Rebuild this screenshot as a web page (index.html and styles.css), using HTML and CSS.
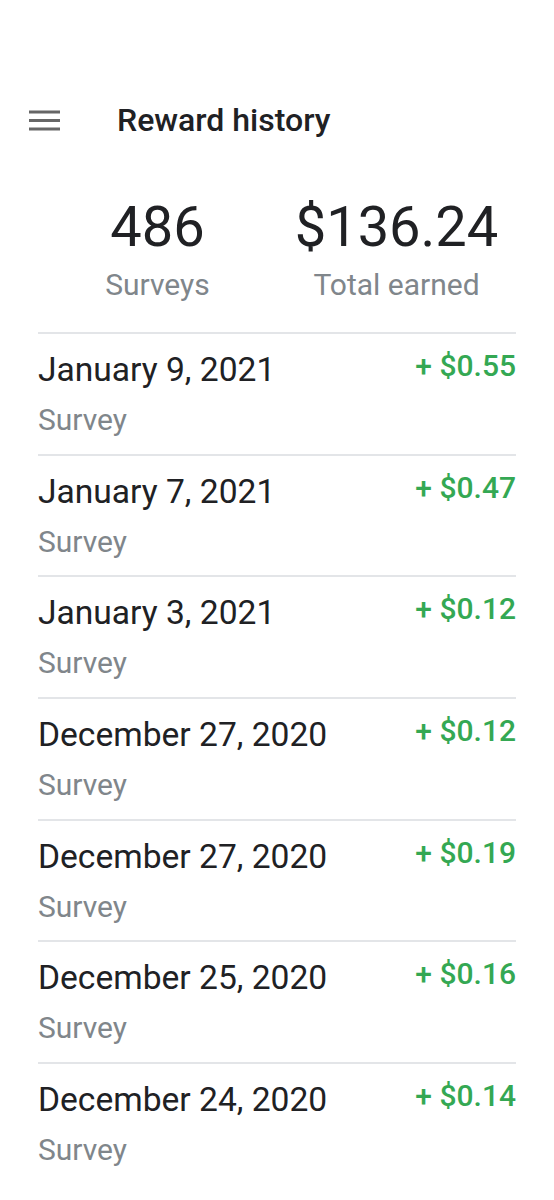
FILE: index.html
```html
<!DOCTYPE html>
<html lang="en">
<head>
    <meta charset="UTF-8">
    <meta name="viewport" content="width=device-width, initial-scale=1.0">
    <title>Reward history</title>
    <link rel="stylesheet" href="styles.css">
</head>
<body>
    <header class="app-bar">
        <button class="menu-button" aria-label="Menu">
            <svg width="31" height="21" viewBox="0 0 31 21">
                <rect x="0" y="0.5" width="31" height="3" fill="#666"/>
                <rect x="0" y="9" width="31" height="3" fill="#666"/>
                <rect x="0" y="17.5" width="31" height="3" fill="#666"/>
            </svg>
        </button>
        <h1 class="title">Reward history</h1>
    </header>

    <section class="summary">
        <div class="stat">
            <div class="stat-value">486</div>
            <div class="stat-label">Surveys</div>
        </div>
        <div class="stat">
            <div class="stat-value">$136.24</div>
            <div class="stat-label">Total earned</div>
        </div>
    </section>

    <ul class="history">
        <li class="entry">
            <div class="entry-info">
                <div class="entry-date">January 9, 2021</div>
                <div class="entry-type">Survey</div>
            </div>
            <div class="entry-amount">+ $0.55</div>
        </li>
        <li class="entry">
            <div class="entry-info">
                <div class="entry-date">January 7, 2021</div>
                <div class="entry-type">Survey</div>
            </div>
            <div class="entry-amount">+ $0.47</div>
        </li>
        <li class="entry">
            <div class="entry-info">
                <div class="entry-date">January 3, 2021</div>
                <div class="entry-type">Survey</div>
            </div>
            <div class="entry-amount">+ $0.12</div>
        </li>
        <li class="entry">
            <div class="entry-info">
                <div class="entry-date">December 27, 2020</div>
                <div class="entry-type">Survey</div>
            </div>
            <div class="entry-amount">+ $0.12</div>
        </li>
        <li class="entry">
            <div class="entry-info">
                <div class="entry-date">December 27, 2020</div>
                <div class="entry-type">Survey</div>
            </div>
            <div class="entry-amount">+ $0.19</div>
        </li>
        <li class="entry">
            <div class="entry-info">
                <div class="entry-date">December 25, 2020</div>
                <div class="entry-type">Survey</div>
            </div>
            <div class="entry-amount">+ $0.16</div>
        </li>
        <li class="entry">
            <div class="entry-info">
                <div class="entry-date">December 24, 2020</div>
                <div class="entry-type">Survey</div>
            </div>
            <div class="entry-amount">+ $0.14</div>
        </li>
    </ul>
</body>
</html>
```

FILE: styles.css
```css
body {
    font-family: Roboto, "Noto Sans", sans-serif;
    margin: 0;
    background-color: #fff;
    color: #202124;
    overflow: hidden;
}
.app-bar {
    display: flex;
    align-items: center;
    height: 62px;
    margin-top: 89px;
    padding-left: 29px;
}
.menu-button {
    background: none;
    border: none;
    padding: 0;
    width: 88px;
    height: 21px;
    text-align: left;
}
.menu-button svg {
    display: block;
}
.title {
    margin: 0;
    font-size: 32px;
    font-weight: 500;
}
.summary {
    display: flex;
    padding: 44px 38px 0;
}
.stat {
    flex: 1;
    text-align: center;
}
.stat-value {
    font-size: 56px;
    line-height: 64px;
}
.stat-label {
    font-size: 30px;
    line-height: 36px;
    margin-top: 8px;
    color: #80868b;
}
.history {
    list-style: none;
    margin: 29px 38px 0;
    padding: 0;
}
.entry {
    display: flex;
    justify-content: space-between;
    height: 119.7px;
    border-top: 2px solid #e3e5e8;
}
.entry-date {
    font-size: 33.6px;
    line-height: 40px;
    margin-top: 16px;
}
.entry-type {
    font-size: 30px;
    line-height: 36px;
    margin-top: 12px;
    color: #80868b;
}
.entry-amount {
    font-size: 30px;
    font-weight: 500;
    line-height: 36px;
    margin-top: 14px;
    color: #34a853;
}
```
